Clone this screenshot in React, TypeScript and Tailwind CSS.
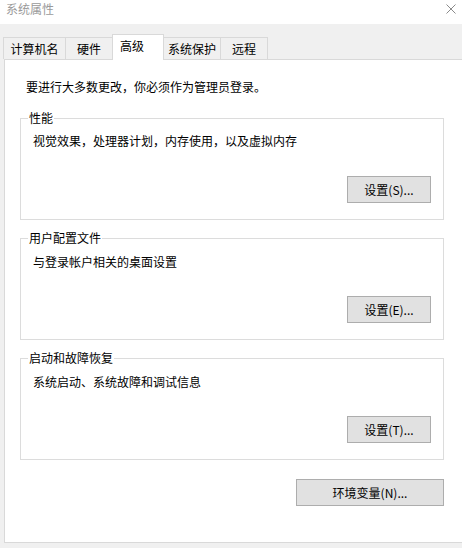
import React from "react";

const font = { fontFamily: '"Noto Sans CJK SC", "Noto Sans", sans-serif' };

function Btn({ label, w }: { label: string; w: string }) {
  return (
    <div
      className={`${w} h-[27px] bg-[#e1e1e1] border border-[#adadad] flex items-center justify-center text-[12px] leading-[16px] text-black`}
    >
      {label}
    </div>
  );
}

function Group({ title, desc, btn, first }: { title: string; desc: string; btn: string; first?: boolean }) {
  return (
    <div
      className={`relative ml-[15px] w-[424px] h-[102px] border border-[#dcdcdc] flex flex-col ${first ? "mt-[23px]" : "mt-[18px]"}`}
    >
      <span className="absolute left-[7px] top-[-9px] bg-white px-[1px] text-[12px] leading-[16px] text-black">
        {title}
      </span>
      <div className={`pl-[12px] ${first ? "pt-[14px]" : "pt-[15px]"} text-[12px] leading-[16px] text-black`}>{desc}</div>
      <div className={`flex justify-end pr-[12px] ${first ? "mt-[27px]" : "mt-[26px]"}`}>
        <Btn label={btn} w="w-[84px]" />
      </div>
    </div>
  );
}

export default function App() {
  return (
    <div className="w-[462px] h-[548px] bg-[#f0f0f0] overflow-hidden flex flex-col" style={font}>
      <div className="h-[24px] bg-white flex items-start justify-between pl-[6px] pr-[5px] pt-[1px] shrink-0">
        <span className="text-[12px] leading-[16px] text-[#9a9a9a]">系统属性</span>
        <svg width="10" height="10" viewBox="0 0 10 10" className="mr-[1px] mt-[3px]">
          <path d="M0.5 0.5 L9.5 9.5 M9.5 0.5 L0.5 9.5" stroke="#8a8a8a" strokeWidth="1" />
        </svg>
      </div>
      <div className="flex items-end pl-[3px] mt-[10px] h-[25px] shrink-0 relative z-10">
        <div className="w-[63px] h-[22px] border border-b-0 border-[#d9d9d9] bg-[#f0f0f0] flex items-center justify-center text-[12px] leading-[16px] text-black">
          计算机名
        </div>
        <div className="-ml-px w-[48px] h-[22px] border border-b-0 border-[#d9d9d9] bg-[#f0f0f0] flex items-center justify-center text-[12px] leading-[16px] text-black">
          硬件
        </div>
        <div className="-ml-px w-[52px] h-[26px] -mb-px border border-b-0 border-[#d9d9d9] bg-white pl-[7px] pt-[3px] text-[12px] leading-[16px] text-black">
          高级
        </div>
        <div className="-ml-px w-[58px] h-[22px] border border-b-0 border-[#d9d9d9] bg-[#f0f0f0] flex items-center justify-center text-[12px] leading-[16px] text-black">
          系统保护
        </div>
        <div className="-ml-px w-[48px] h-[22px] border border-b-0 border-[#d9d9d9] bg-[#f0f0f0] flex items-center justify-center text-[12px] leading-[16px] text-black">
          远程
        </div>
      </div>
      <div className="ml-[4px] w-[462px] h-[484px] bg-white border border-[#d9d9d9] flex flex-col shrink-0">
        <div className="pl-[21px] pt-[19px] text-[12px] leading-[16px] text-black">
          要进行大多数更改，你必须作为管理员登录。
        </div>
        <Group first title="性能" desc="视觉效果，处理器计划，内存使用，以及虚拟内存" btn="设置(S)..." />
        <Group title="用户配置文件" desc="与登录帐户相关的桌面设置" btn="设置(E)..." />
        <Group title="启动和故障恢复" desc="系统启动、系统故障和调试信息" btn="设置(T)..." />
        <div className="ml-[291px] mt-[19px]">
          <Btn label="环境变量(N)..." w="w-[148px]" />
        </div>
      </div>
    </div>
  );
}
